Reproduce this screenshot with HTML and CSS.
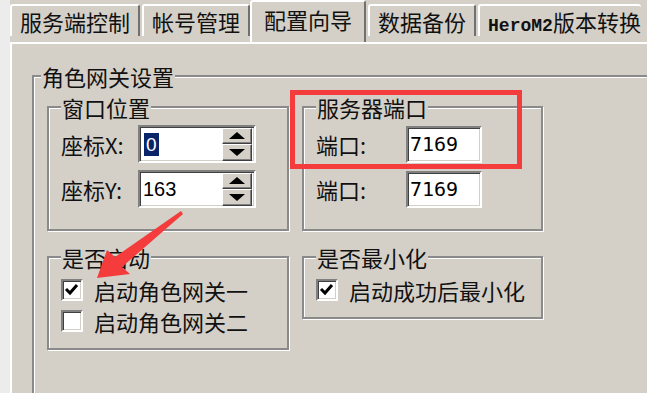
FILE: index.html
```html
<!DOCTYPE html>
<html lang="zh-CN">
<head>
  <meta charset="UTF-8">
  <title>配置向导</title>
  <link rel="stylesheet" href="styles.css">
</head>
<body>

<div class="window">
  <div class="tabs">
    <div class="tab">服务端控制</div>
    <div class="tab">帐号管理</div>
    <div class="tab active">配置向导</div>
    <div class="tab">数据备份</div>
    <div class="tab"><span class="mono">HeroM2</span>版本转换</div>
  </div>

  <div class="panel">
    <fieldset class="group outer">
      <legend>角色网关设置</legend>
      <div class="grid">

        <!-- 窗口位置 -->
        <fieldset class="group box-top">
          <legend>窗口位置</legend>
          <div class="rows">
            <div class="field">
              <span class="label">座标X:</span>
              <div class="edit spin">
                <span class="sel">0</span>
                <div class="spin-btns"><span class="up"></span><span class="down"></span></div>
              </div>
            </div>
            <div class="field">
              <span class="label">座标Y:</span>
              <div class="edit spin">
                <span class="num">163</span>
                <div class="spin-btns"><span class="up"></span><span class="down"></span></div>
              </div>
            </div>
          </div>
        </fieldset>

        <!-- 服务器端口 -->
        <fieldset class="group box-top">
          <legend>服务器端口</legend>
          <div class="rows">
            <div class="field">
              <span class="label wide">端口:</span>
              <div class="edit port"><span class="port-num">7169</span></div>
            </div>
            <div class="field">
              <span class="label wide">端口:</span>
              <div class="edit port"><span class="port-num">7169</span></div>
            </div>
          </div>
        </fieldset>

        <!-- 是否启动 -->
        <fieldset class="group box-check">
          <legend>是否启动</legend>
          <div class="checks">
            <div class="check-row">
              <span class="check"><svg width="18" height="18" viewBox="0 0 18 18"><polyline points="3,8 7,12 14,4" fill="none" stroke="#000" stroke-width="3"/></svg></span>
              <span>启动角色网关一</span>
            </div>
            <div class="check-row">
              <span class="check"></span>
              <span>启动角色网关二</span>
            </div>
          </div>
        </fieldset>

        <!-- 是否最小化 -->
        <fieldset class="group box-check">
          <legend>是否最小化</legend>
          <div class="checks">
            <div class="check-row">
              <span class="check"><svg width="18" height="18" viewBox="0 0 18 18"><polyline points="3,8 7,12 14,4" fill="none" stroke="#000" stroke-width="3"/></svg></span>
              <span>启动成功后最小化</span>
            </div>
          </div>
        </fieldset>

      </div>
    </fieldset>
  </div>
</div>

<!-- 标注：红框和箭头 -->
<svg class="overlay" width="647" height="393" viewBox="0 0 647 393">
  <rect x="292.5" y="92.5" width="227" height="74" fill="none" stroke="#f43c3c" stroke-width="5"/>
  <polygon points="181,211 115,257 107,250 97,278 130,274 122,267 183,214" fill="#f43c3c"/>
</svg>

</body>
</html>
```

FILE: styles.css
```css
body {
  margin: 0;
  height: 393px;
  overflow: hidden;
  position: relative;
  background: #ececec;
  font-family: "Noto Sans CJK SC", sans-serif;
  font-size: 22px;
  color: #111;
}

.window {
  margin-left: 10px;
  height: 393px;
  background: #d4d0c8;
}

/* 选项卡 */
.tabs {
  display: flex;
  align-items: flex-start;
  height: 42px;
}

.tab {
  margin-top: 4px;
  margin-right: 2px;
  height: 30px;
  line-height: 30px;
  padding: 0 8px;
  border-top: 2px solid #fff;
  border-left: 2px solid #fff;
  border-right: 2px solid #707070;
  border-radius: 3px 3px 0 0;
  white-space: nowrap;
}

.tab:last-child {
  margin-right: 0;
  padding-right: 0;
  border-right: 0;
}

.tab.active {
  margin-top: 0;
  margin-left: -2px;
  height: 40px;
  line-height: 34px;
  padding: 0 12px;
}

.mono {
  font-family: "Liberation Mono", monospace;
  font-size: 18px;
  font-weight: bold;
}

.panel {
  box-sizing: border-box;
  height: 351px;
  padding: 20px 0 0 20px;
  border-top: 2px solid #fff;
  border-left: 2px solid #fff;
}

/* 分组框 */
.group {
  margin: 0;
  padding: 0 0 0 12px;
  min-width: 0;
  border: 2px solid #8a8a8a;
  box-shadow: inset 1px 1px 0 #fff, 1px 1px 0 #fff;
}

.group legend {
  padding: 0 1px;
  line-height: 24px;
  background: #d4d0c8;
}

/* 外框延伸出窗口，右边和底边看不到 */
.outer {
  box-sizing: border-box;
  width: 615px;
  height: 329px;
  padding: 7px 0 0 13px;
  border-right: 0;
  border-bottom: 0;
  box-shadow: inset 1px 1px 0 #fff;
}

.outer > legend {
  margin-left: -6px;
}

.grid {
  display: grid;
  grid-template-columns: 242px 241px;
  column-gap: 13px;
  row-gap: 14px;
  align-items: start;
}

.box-top {
  padding-top: 6px;
  padding-bottom: 21px;
}

.box-check {
  padding-top: 5px;
  padding-bottom: 12px;
}

.rows {
  display: flex;
  flex-direction: column;
  gap: 7px;
}

.field {
  display: flex;
  align-items: center;
  height: 38px;
}

.label {
  width: 77px;
  flex-shrink: 0;
}

.label.wide {
  width: 90px;
}

/* 输入框 */
.edit {
  box-sizing: border-box;
  height: 38px;
  display: flex;
  align-items: center;
  background: #fff;
  border: 2px solid;
  border-color: #808080 #fff #fff #808080;
  box-shadow: inset 1px 1px 0 #404040, inset -1px -1px 0 #d4d0c8;
}

.spin {
  width: 118px;
  padding: 0 2px 0 3px;
}

.port {
  width: 76px;
  height: 37px;
  padding-left: 2px;
}

.sel {
  margin-left: 1px;
  padding: 0 2px;
  line-height: 23px;
  background: #0a246a;
  color: #fff;
  font-family: "Liberation Sans", sans-serif;
  font-size: 19px;
}

.num {
  font-family: "Liberation Sans", sans-serif;
  font-size: 20px;
  color: #000;
}

.port-num {
  font-family: "DejaVu Sans Mono", monospace;
  font-size: 20px;
  color: #000;
}

.spin-btns {
  margin-left: auto;
  width: 30px;
  height: 33px;
  display: flex;
  flex-direction: column;
}

.spin-btns span {
  flex: 1;
  display: flex;
  align-items: center;
  justify-content: center;
  background: #d4d0c8;
  border: 1px solid;
  border-color: #fff #404040 #404040 #fff;
  box-shadow: inset -1px -1px 0 #808080;
}

.spin-btns .up::after {
  content: "";
  border-left: 8px solid transparent;
  border-right: 8px solid transparent;
  border-bottom: 7px solid #000;
}

.spin-btns .down::after {
  content: "";
  border-left: 8px solid transparent;
  border-right: 8px solid transparent;
  border-top: 7px solid #000;
}

/* 复选框 */
.checks {
  display: flex;
  flex-direction: column;
}

.check-row {
  display: flex;
  align-items: center;
  height: 31px;
  gap: 11px;
}

.check {
  box-sizing: border-box;
  width: 22px;
  height: 22px;
  display: flex;
  align-items: center;
  justify-content: center;
  background: #fff;
  border: 2px solid;
  border-color: #808080 #fff #fff #808080;
  box-shadow: inset 1px 1px 0 #404040, inset -1px -1px 0 #d4d0c8;
}

.overlay {
  position: absolute;
  left: 0;
  top: 0;
  pointer-events: none;
}
```
